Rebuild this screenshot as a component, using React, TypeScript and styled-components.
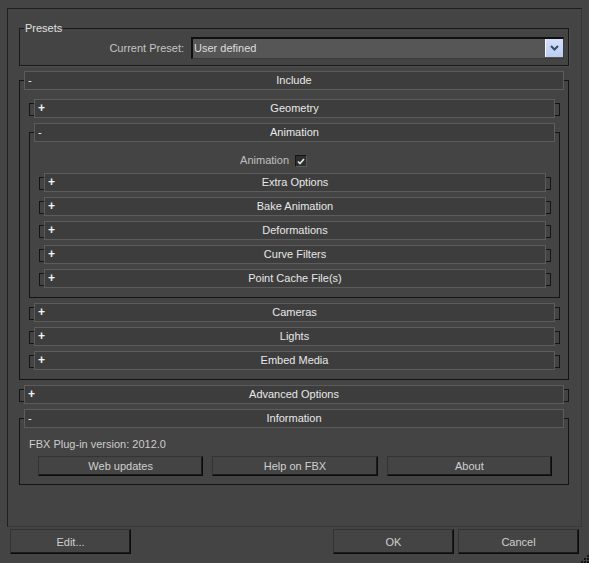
import React from "react";
import styled, { createGlobalStyle } from "styled-components";

const GlobalStyle = createGlobalStyle`
  html, body {
    margin: 0;
    padding: 0;
    background: #444444;
  }
  body {
    font-family: "Liberation Sans", Arial, sans-serif;
    font-size: 11px;
    color: #d4d4d4;
  }
`;

const Dialog = styled.div`
  position: relative;
  width: 589px;
  height: 563px;
  padding: 8px 0 0 7px;
  box-sizing: border-box;
  background: #444444;
  overflow: hidden;
`;

const OuterFrame = styled.div`
  width: 575px;
  box-sizing: border-box;
  border: 1px solid #1e1e1e;
  border-right-color: #393939;
  border-bottom-color: #393939;
  padding: 19px 12px 41px 11px;
  display: flex;
  flex-direction: column;
  gap: 5px;
`;

const GroupBox = styled.div`
  position: relative;
  border: 1px solid #181818;
  box-shadow: 1px 1px 0 #4e4e4e;
  padding: 8px 4px 6px 0;
`;

const GroupLabel = styled.span`
  position: absolute;
  top: -8px;
  left: 4px;
  padding: 0 1px;
  line-height: 14px;
  background: #444444;
  color: #e0e0e0;
`;

const PresetRow = styled.div`
  display: flex;
  justify-content: flex-end;
  align-items: center;
  gap: 7px;
`;

const FieldLabel = styled.span`
  color: #c4c4c4;
`;

const Select = styled.div`
  width: 373px;
  height: 22px;
  box-sizing: border-box;
  display: flex;
  align-items: stretch;
  background: #565656;
  border-top: 2px solid #101010;
  border-left: 2px solid #101010;
  border-right: 1px solid #3a3a3a;
  border-bottom: 1px solid #3a3a3a;
`;

const SelectValue = styled.span`
  flex: 1;
  padding-left: 1px;
  line-height: 19px;
  color: #dedede;
`;

const SelectArrow = styled.span`
  width: 17px;
  height: 18px;
  display: flex;
  align-items: center;
  justify-content: center;
  background: linear-gradient(#d4e0fa, #bccdf3);
  border-left: 1px solid #f4f7ff;
`;

const Frame = styled.div<{ $open: boolean }>`
  border: 1px solid #141414;
  margin-top: ${(p) => (p.$open ? 9 : 4)}px;
  margin-bottom: ${(p) => (p.$open ? 0 : 2)}px;
`;

const Header = styled.div<{ $open: boolean }>`
  height: 19px;
  box-sizing: border-box;
  margin: ${(p) => (p.$open ? "-10px 4px 0" : "-5px 4px -3px")};
  display: grid;
  grid-template-columns: 1fr auto 1fr;
  align-items: center;
  background: #3d3d3d;
  border: 1px solid #5c5c5c;
  color: #e8e8e8;
  line-height: 17px;
`;

const Sign = styled.span<{ $open: boolean }>`
  margin-left: 3px;
  font-weight: ${(p) => (p.$open ? "normal" : "bold")};
  font-size: ${(p) => (p.$open ? 11 : 12)}px;
  color: #f4f4f4;
`;

const Body = styled.div<{ $bottom?: number }>`
  display: flex;
  flex-direction: column;
  gap: 5px;
  padding: 9px 8px ${(p) => p.$bottom ?? 9}px 9px;
`;

const CheckRow = styled.div`
  display: grid;
  grid-template-columns: 1fr 1fr;
  align-items: center;
  height: 17px;
`;

const CheckLabel = styled.span`
  justify-self: end;
  padding-right: 6px;
  color: #c0c0c0;
`;

const CheckBox = styled.span`
  width: 12px;
  height: 12px;
  box-sizing: border-box;
  display: flex;
  align-items: center;
  justify-content: center;
  margin-top: 3px;
  background: #2e2e2e;
  border: 1px solid #161616;
  border-right-color: #5a5a5a;
  border-bottom-color: #5a5a5a;
`;

const InfoText = styled.div`
  line-height: 14px;
  color: #cccccc;
`;

const ButtonRow = styled.div`
  display: grid;
  grid-template-columns: repeat(3, 1fr);
  gap: 9px;
  margin: 0 8px 0 9px;
`;

const Button = styled.button<{ $h?: number }>`
  height: ${(p) => p.$h ?? 20}px;
  box-sizing: border-box;
  padding: 0;
  font: inherit;
  color: #d0d0d0;
  background: #444444;
  border: 1px solid #333333;
  border-right-color: #0c0c0c;
  border-bottom-color: #0c0c0c;
  box-shadow: inset -1px -1px 0 #1c1c1c;
`;

const Footer = styled.div`
  width: 569px;
  margin: 2px 0 0 3px;
  display: flex;
  justify-content: space-between;
`;

const FooterGroup = styled.div`
  display: flex;
  gap: 4px;
`;

const WideButton = styled(Button)`
  width: 121px;
`;

const Grip = styled.svg`
  position: absolute;
  right: 0;
  bottom: 0;
`;

type RolloutProps = {
  title: string;
  open?: boolean;
  children?: React.ReactNode;
  bottom?: number;
};

const Rollout = ({ title, open = false, children, bottom }: RolloutProps) => (
  <Frame $open={open}>
    <Header $open={open}>
      <Sign $open={open}>{open ? "-" : "+"}</Sign>
      <span>{title}</span>
      <span />
    </Header>
    {open && <Body $bottom={bottom}>{children}</Body>}
  </Frame>
);

const App = () => {
  return (
    <Dialog>
      <GlobalStyle />
      <OuterFrame>
        <GroupBox>
          <GroupLabel>Presets</GroupLabel>
          <PresetRow>
            <FieldLabel>Current Preset:</FieldLabel>
            <Select>
              <SelectValue>User defined</SelectValue>
              <SelectArrow>
                <svg width="9" height="6" viewBox="0 0 9 6">
                  <path d="M1 1 L4.5 4.5 L8 1" fill="none" stroke="#3b4866" strokeWidth="2" />
                </svg>
              </SelectArrow>
            </Select>
          </PresetRow>
        </GroupBox>

        <Rollout title="Include" open>
          <Rollout title="Geometry" />
          <Rollout title="Animation" open>
            <CheckRow>
              <CheckLabel>Animation</CheckLabel>
              <CheckBox>
                <svg width="8" height="7" viewBox="0 0 8 7">
                  <path d="M1 3.5 L3 5.5 L7 1" fill="none" stroke="#e8e8e8" strokeWidth="1.6" />
                </svg>
              </CheckBox>
            </CheckRow>
            <Rollout title="Extra Options" />
            <Rollout title="Bake Animation" />
            <Rollout title="Deformations" />
            <Rollout title="Curve Filters" />
            <Rollout title="Point Cache File(s)" />
          </Rollout>
          <Rollout title="Cameras" />
          <Rollout title="Lights" />
          <Rollout title="Embed Media" />
        </Rollout>

        <Rollout title="Advanced Options" />

        <Rollout title="Information" open bottom={8}>
          <InfoText>FBX Plug-in version: 2012.0</InfoText>
          <ButtonRow>
            <Button>Web updates</Button>
            <Button>Help on FBX</Button>
            <Button>About</Button>
          </ButtonRow>
        </Rollout>
      </OuterFrame>

      <Footer>
        <WideButton $h={25}>Edit...</WideButton>
        <FooterGroup>
          <WideButton $h={25}>OK</WideButton>
          <WideButton $h={25}>Cancel</WideButton>
        </FooterGroup>
      </Footer>

      <Grip width="9" height="9" viewBox="0 0 9 9">
        <rect x="7" y="1" width="2" height="2" fill="#151515" />
        <rect x="4" y="4" width="2" height="2" fill="#151515" />
        <rect x="7" y="4" width="2" height="2" fill="#151515" />
        <rect x="1" y="7" width="2" height="2" fill="#151515" />
        <rect x="4" y="7" width="2" height="2" fill="#151515" />
        <rect x="7" y="7" width="2" height="2" fill="#151515" />
      </Grip>
    </Dialog>
  );
};

export default App;
